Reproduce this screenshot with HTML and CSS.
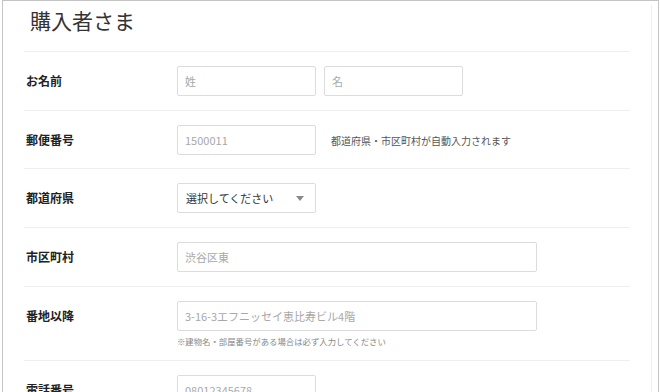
FILE: index.html
```html
<!DOCTYPE html>
<html lang="ja">

<head>
    <meta charset="utf-8">
    <title>購入者さま</title>
    <link rel="stylesheet" href="styles.css">
</head>

<body>
    <div class="frame">
        <div class="panel">
            <h2 class="title">購入者さま</h2>

            <div class="form">
                <div class="row">
                    <div class="label">お名前</div>
                    <div class="field">
                        <div class="inline">
                            <input type="text" class="input" placeholder="姓">
                            <input type="text" class="input" placeholder="名">
                        </div>
                    </div>
                </div>

                <div class="row row-tight">
                    <div class="label">郵便番号</div>
                    <div class="field">
                        <div class="inline">
                            <input type="text" class="input" placeholder="1500011">
                            <span class="hint">都道府県・市区町村が自動入力されます</span>
                        </div>
                    </div>
                </div>

                <div class="row">
                    <div class="label">都道府県</div>
                    <div class="field">
                        <div class="select">
                            <span>選択してください</span>
                            <span class="caret"></span>
                        </div>
                    </div>
                </div>

                <div class="row">
                    <div class="label">市区町村</div>
                    <div class="field">
                        <input type="text" class="input wide" placeholder="渋谷区東">
                    </div>
                </div>

                <div class="row">
                    <div class="label">番地以降</div>
                    <div class="field">
                        <input type="text" class="input wide" placeholder="3-16-3エフニッセイ恵比寿ビル4階">
                        <p class="note">※建物名・部屋番号がある場合は必ず入力してください</p>
                    </div>
                </div>

                <div class="row">
                    <div class="label">電話番号</div>
                    <div class="field">
                        <input type="text" class="input" placeholder="08012345678">
                    </div>
                </div>
            </div>
        </div>
    </div>
</body>

</html>
```

FILE: styles.css
```css
* {
    box-sizing: border-box;
    margin: 0;
    padding: 0;
}

body {
    font-family: "Noto Sans CJK JP", sans-serif;
    background: #fff;
    color: #333;
    height: 392px;
    overflow: hidden;
}

.frame {
    width: 657px;
    height: 400px;
    margin-left: 2px;
    border: 1px solid #c4c4c4;
    border-bottom: none;
}

.panel {
    width: 649px;
    height: 100%;
    padding-left: 21px;
    border-right: 1px solid #f1efe9;
}

.title {
    font-size: 21px;
    font-weight: 400;
    line-height: 30px;
    color: #333;
    margin-top: 4px;
    margin-bottom: 16px;
    padding-left: 6px;
}

.form {
    width: 606px;
    border-top: 1px solid #efefef;
}

.row {
    display: flex;
    padding: 14px 0;
    border-bottom: 1px solid #efefef;
}

.row-tight {
    padding-bottom: 13px;
}

.label {
    width: 153px;
    padding-left: 2px;
    font-size: 12px;
    font-weight: 700;
    line-height: 30px;
    color: #222;
}

.inline {
    display: flex;
    align-items: center;
    gap: 8px;
}

.input {
    width: 139px;
    height: 30px;
    padding: 0 7px;
    border: 1px solid #dcdcdc;
    border-radius: 2px;
    font-family: "Noto Sans CJK JP", sans-serif;
    font-size: 11px;
    color: #333;
    outline: none;
}

.input::placeholder {
    color: #a8a8a8;
}

.input.wide {
    width: 360px;
    display: block;
}

.hint {
    margin-left: 7px;
    font-size: 10px;
    color: #555;
}

.select {
    width: 139px;
    height: 30px;
    padding: 0 11px 0 8px;
    border: 1px solid #dcdcdc;
    border-radius: 2px;
    display: flex;
    align-items: center;
    justify-content: space-between;
    font-size: 11px;
    color: #333;
}

.caret {
    width: 0;
    height: 0;
    border-left: 4px solid transparent;
    border-right: 4px solid transparent;
    border-top: 5px solid #8a8a8a;
}

.note {
    margin-top: 4px;
    margin-bottom: -2px;
    font-size: 8.4px;
    line-height: 13px;
    color: #888;
}
```
